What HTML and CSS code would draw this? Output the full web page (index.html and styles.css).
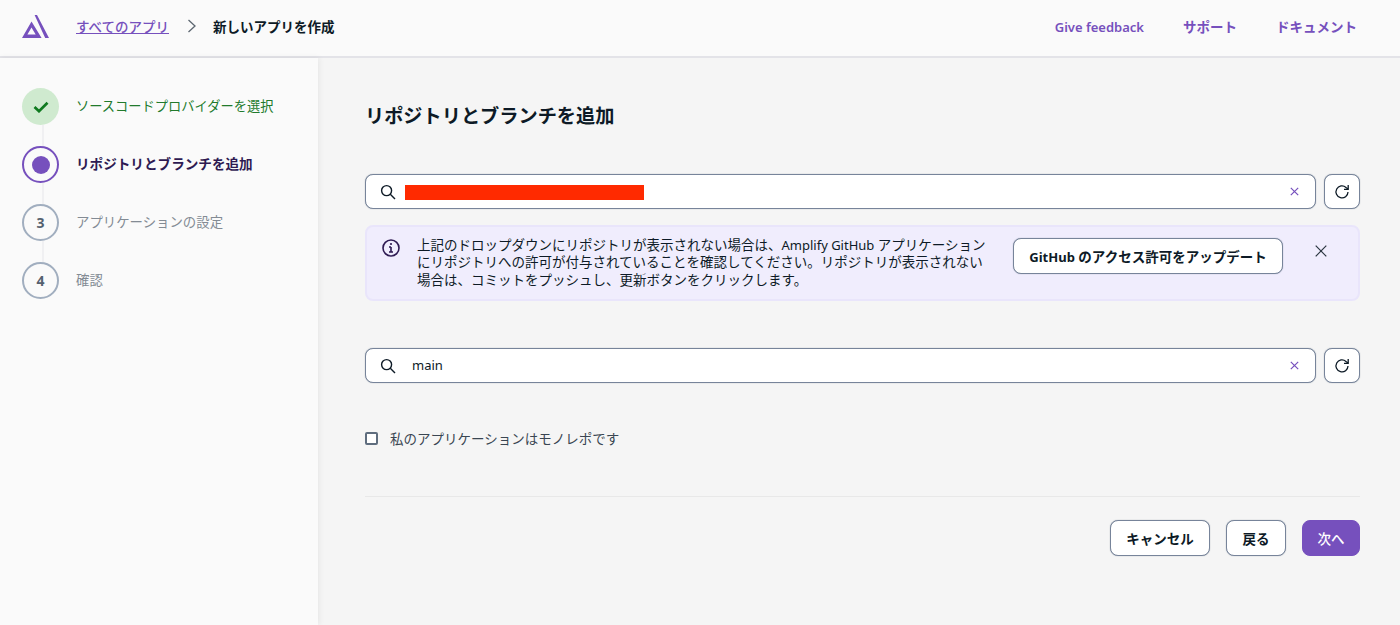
FILE: index.html
```html
<!DOCTYPE html>
<html lang="ja">
<head>
<meta charset="utf-8">
<title>新しいアプリを作成</title>
<link rel="stylesheet" href="styles.css">
</head>
<body>
<header class="topbar">
  <svg class="logo" width="27" height="23" viewBox="0 0 27 23"><path class="logo-a" d="M12.6 0 15 0 27 23 23.2 23ZM9.5 6.5 19.6 23 0 23ZM9.5 12.6 5.4 19.6 13.7 19.6Z" fill-rule="evenodd"/></svg>
  <nav class="crumbs">
    <a class="crumb-link">すべてのアプリ</a>
    <svg class="crumb-sep" width="10" height="14" viewBox="0 0 10 14"><path d="M1.5 1 8 7 1.5 13"/></svg>
    <span class="crumb-current">新しいアプリを作成</span>
  </nav>
  <nav class="toplinks">
    <a class="latin">Give feedback</a>
    <a>サポート</a>
    <a>ドキュメント</a>
  </nav>
</header>
<div class="layout">
  <aside class="sidebar">
    <ol class="steps">
      <li class="step done">
        <span class="dot"><svg width="16" height="12" viewBox="0 0 16 12"><path d="M1.5 6 6 10.2 14.5 1.8"/></svg></span>
        <span class="label">ソースコードプロバイダーを選択</span>
      </li>
      <li class="step current">
        <span class="dot"><i class="pip"></i></span>
        <span class="label">リポジトリとブランチを追加</span>
      </li>
      <li class="step">
        <span class="dot">3</span>
        <span class="label">アプリケーションの設定</span>
      </li>
      <li class="step">
        <span class="dot">4</span>
        <span class="label">確認</span>
      </li>
    </ol>
  </aside>
  <main class="content">
    <h1 class="title">リポジトリとブランチを追加</h1>
    <div class="search-row">
      <div class="search">
        <svg class="mag" width="16" height="16" viewBox="0 0 16 16"><circle cx="6.6" cy="6.6" r="5"/><path d="M10.3 10.3 15 15"/></svg>
        <span class="redact"></span>
        <svg class="clear" width="9" height="9" viewBox="0 0 9 9"><path d="M.8.8 8.2 8.2M8.2.8.8 8.2"/></svg>
      </div>
      <button class="refresh"><svg width="16" height="16" viewBox="0 0 16 16"><path d="M14 8a6 6 0 1 1-2-4.6L14 5"/><path d="M14.2 1v4.3H10"/></svg></button>
    </div>
    <section class="alert">
      <svg class="info" width="18" height="18" viewBox="0 0 18 18"><circle cx="9" cy="9" r="8"/><path d="M9 8v5M7 8h2M7 13h4"/><circle class="info-dot" cx="9" cy="5" r="1.1"/></svg>
      <p class="alert-text">上記のドロップダウンにリポジトリが表示されない場合は、<span class="latin">Amplify GitHub</span> アプリケーション<br>にリポジトリへの許可が付与されていることを確認してください。リポジトリが表示されない<br>場合は、コミットをプッシュし、更新ボタンをクリックします。</p>
      <button class="btn alert-btn"><span class="latin">GitHub</span> のアクセス許可をアップデート</button>
      <svg class="alert-close" width="12" height="12" viewBox="0 0 12 12"><path d="M.7.7 11.3 11.3M11.3.7.7 11.3"/></svg>
    </section>
    <div class="search-row branch">
      <div class="search">
        <svg class="mag" width="16" height="16" viewBox="0 0 16 16"><circle cx="6.6" cy="6.6" r="5"/><path d="M10.3 10.3 15 15"/></svg>
        <span class="search-value latin">main</span>
        <svg class="clear" width="9" height="9" viewBox="0 0 9 9"><path d="M.8.8 8.2 8.2M8.2.8.8 8.2"/></svg>
      </div>
      <button class="refresh"><svg width="16" height="16" viewBox="0 0 16 16"><path d="M14 8a6 6 0 1 1-2-4.6L14 5"/><path d="M14.2 1v4.3H10"/></svg></button>
    </div>
    <label class="check">
      <span class="box"></span>
      <span>私のアプリケーションはモノレポです</span>
    </label>
    <hr class="rule">
    <div class="actions">
      <button class="btn cancel">キャンセル</button>
      <button class="btn back">戻る</button>
      <button class="btn primary">次へ</button>
    </div>
  </main>
</div>
</body>
</html>
```
FILE: styles.css
```css
* { box-sizing: border-box; }
html, body { height: 100%; }
body {
  margin: 0;
  height: 625px;
  overflow: hidden;
  display: flex;
  flex-direction: column;
  background: #f5f5f5;
  color: #0d1a26;
  font-family: "Noto Sans", "Noto Sans CJK JP", sans-serif;
  font-size: 13.5px;
}
.latin { font-size: 13px; }
.topbar {
  flex: none;
  height: 58px;
  display: flex;
  align-items: center;
  padding: 0 43px 4px 22px;
  background: #fafafa;
  border-bottom: 2px solid #e3e3e8;
}
.logo { flex: none; }
.logo-a { fill: #7650bd; }
.crumbs { display: flex; align-items: center; margin-left: 27px; }
.crumb-link { color: #7650bd; text-decoration: underline; font-weight: 500; }
.crumb-sep { margin: 0 16px 0 18px; fill: none; stroke: #5c6670; stroke-width: 1.3; }
.crumb-current { color: #0d1a26; font-weight: 600; }
.toplinks { display: flex; align-items: baseline; gap: 39px; margin-left: auto; color: #7650bd; font-weight: 600; }
.layout { flex: 1; display: flex; min-height: 0; }
.sidebar {
  flex: none;
  width: 318px;
  background: #fafafa;
  padding: 30px 22px;
  box-shadow: 1px 0 6px rgba(0, 0, 0, .07);
}
.steps { list-style: none; margin: 0; padding: 0; display: flex; flex-direction: column; gap: 21px; }
.step { position: relative; display: flex; align-items: center; gap: 17px; color: #838b94; }
.step + .step::before {
  content: "";
  position: absolute;
  left: 20px;
  top: -21px;
  width: 2px;
  height: 21px;
  background: #f0f0f2;
}
.label { margin-top: -3px; font-size: 13.4px; }
.dot {
  flex: none;
  width: 37px;
  height: 37px;
  display: flex;
  align-items: center;
  justify-content: center;
  border-radius: 50%;
  border: 2px solid #a1aebf;
  color: #55616f;
  font-size: 14px;
  font-weight: 700;
  line-height: 1;
}
.done .dot { background: #cfeacf; border: 0; }
.done .dot svg { fill: none; stroke: #0f7a1f; stroke-width: 2.7; }
.done .label { color: #217a2c; font-size: 13.25px; }
.current .dot { border-color: #7650bd; }
.current .label { color: #2e1a52; font-weight: 700; font-size: 13.6px; }
.pip { width: 18px; height: 18px; border-radius: 50%; background: #7650bd; }
.content { flex: 1; min-width: 0; padding: 44px 40px 0 47px; }
.title { margin: 0 0 45px; font-size: 19.2px; line-height: 27px; font-weight: 700; color: #0d1a26; }
.search-row { display: flex; gap: 8px; height: 35px; }
.search {
  flex: 1;
  display: flex;
  align-items: center;
  padding: 0 16px 0 14px;
  background: #fff;
  border: 1px solid #77849a;
  box-shadow: 0 0 1px rgba(90, 105, 125, .7);
  border-radius: 8px;
}
.mag { flex: none; fill: none; stroke: #0d1a26; stroke-width: 1.4; }
.redact { width: 239px; height: 15px; margin: 2px 0 0 9px; background: #ff2a00; }
.search-value { margin: -2px 0 0 16px; }
.clear { margin-left: auto; fill: none; stroke: #7650bd; stroke-width: 1.2; }
.refresh {
  flex: none;
  width: 36px;
  padding: 0;
  display: flex;
  align-items: center;
  justify-content: center;
  background: #fff;
  border: 1px solid #77849a;
  box-shadow: 0 0 1px rgba(90, 105, 125, .7);
  border-radius: 8px;
}
.refresh svg { fill: none; stroke: #0d1a26; stroke-width: 1.3; }
.alert {
  position: relative;
  margin-top: 16px;
  height: 76px;
  display: flex;
  align-items: flex-start;
  padding: 12px 0 0 15px;
  background: #f0edfd;
  border: 2px solid #e9e5fb;
  border-radius: 8px;
}
.info { flex: none; fill: none; stroke: #2e1a52; stroke-width: 1.6; }
.info-dot { fill: #2e1a52; stroke: none; }
.alert-text { flex: none; width: 572px; margin: -2px 0 0 17px; line-height: 17.4px; color: #0d1a26; white-space: nowrap; }
.btn {
  height: 36px;
  padding: 0;
  font: inherit;
  font-weight: 700;
  color: #0d1a26;
  background: #fff;
  border: 1px solid #77849a;
  box-shadow: 0 0 1px rgba(90, 105, 125, .7);
  border-radius: 8px;
}
.alert-btn { margin: -1px 0 0 24px; width: 270px; }
.alert-close { margin: 6px 0 0 32px; fill: none; stroke: #2a3540; stroke-width: 1.2; }
.search-row.branch { margin-top: 47px; }
.check { display: flex; align-items: center; gap: 12px; margin-top: 45px; height: 20px; color: #3a4652; }
.box { flex: none; width: 13px; height: 13px; border: 2px solid #5f6d7e; border-radius: 2px; background: #fff; }
.rule { margin: 48px 0 0; border: 0; border-top: 1px solid #e8e8e8; }
.actions { display: flex; justify-content: flex-end; gap: 16px; margin-top: 23px; }
.cancel { width: 100px; }
.back { width: 60px; }
.primary { background: #7650bd; border-color: #7650bd; box-shadow: none; color: #fff; font-weight: 500; width: 58px; }
```
